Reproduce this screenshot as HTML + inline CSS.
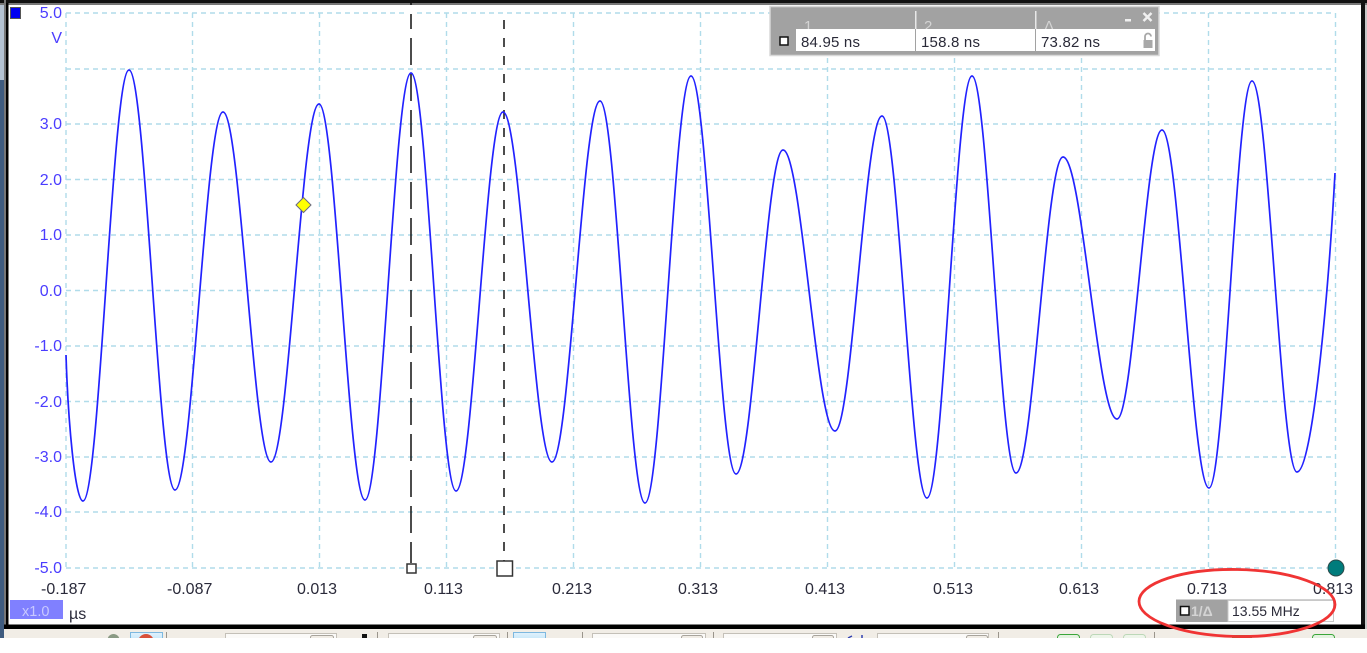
<!DOCTYPE html>
<html>
<head>
<meta charset="utf-8">
<style>
html,body{margin:0;padding:0;background:#fff}
body{width:1367px;height:653px;overflow:hidden;position:relative}
svg{display:block}
#root{position:absolute;left:0;top:0;filter:blur(.3px)}
text{font-family:"Liberation Sans",sans-serif}
</style>
</head>
<body>
<svg id="root" width="1367" height="653" viewBox="0 0 1367 653" xmlns="http://www.w3.org/2000/svg">
<defs>
<linearGradient id="lb" x1="0" y1="0" x2="0" y2="1"><stop offset="0" stop-color="#e2f2fc"/><stop offset="1" stop-color="#bfe3f8"/></linearGradient>
</defs>
<!-- outside frame -->
<rect x="0" y="0" width="1367" height="653" fill="#fff"/>
<rect x="0" y="0" width="4" height="80" fill="#b4c2d2"/>
<rect x="0" y="80" width="4" height="558" fill="#3f5c80"/>
<rect x="1365" y="0" width="2" height="638" fill="#c8c8c8"/>
<!-- toolbar -->
<rect x="4" y="629" width="1363" height="9" fill="#f1ede6"/>
<g fill="#fbfaf8" stroke="#c4c0b8">
<rect x="225.500" y="633.500" width="111" height="8"/>
<rect x="388.500" y="633.500" width="111" height="8"/>
<rect x="592.500" y="633.500" width="113" height="8"/>
<rect x="723.500" y="633.500" width="113" height="8"/>
<rect x="877.500" y="633.500" width="111" height="8"/>
</g>
<g fill="#f1ede6" stroke="#a8a49c">
<rect x="310.500" y="635.500" width="23" height="6" rx="2"/>
<rect x="473.500" y="635.500" width="23" height="6" rx="2"/>
<rect x="681.500" y="635.500" width="21" height="6" rx="2"/>
<rect x="812.500" y="635.500" width="21" height="6" rx="2"/>
<rect x="966.500" y="635.500" width="21" height="6" rx="2"/>
</g>
<g fill="#9a958c">
<rect x="166" y="632" width="1" height="6"/><rect x="377" y="632" width="1" height="6"/>
<rect x="507" y="632" width="1" height="6"/><rect x="582" y="632" width="1" height="6"/>
<rect x="713" y="632" width="1" height="6"/><rect x="998" y="632" width="1" height="6"/>
<rect x="1154" y="632" width="1" height="6"/>
</g>
<circle cx="113.500" cy="640" r="6" fill="#8a9a84"/>
<rect x="130.500" y="632.500" width="32" height="9" fill="url(#lb)" stroke="#7db8e0"/>
<circle cx="146" cy="642" r="8" fill="#d8503a"/>
<rect x="362" y="634" width="5" height="4" fill="#111"/>
<rect x="513.500" y="632.500" width="32" height="9" fill="url(#lb)" stroke="#7db8e0"/>
<path d="M848 638l4-2M862 638v-3" stroke="#3040b0" stroke-width="1.500" fill="none"/>
<g fill="#e4f2e0" stroke="#3aa63a">
<rect x="1057.500" y="634.500" width="22" height="7" rx="3"/>
<rect x="1312.500" y="634.500" width="22" height="7" rx="3"/>
</g>
<g fill="#eef5ea" stroke="#bcd8b8">
<rect x="1090.500" y="634.500" width="22" height="7" rx="3"/>
<rect x="1123.500" y="634.500" width="22" height="7" rx="3"/>
</g>
<rect x="1232" y="635" width="20" height="6" rx="2" fill="#4d9a3a"/>
<rect x="0" y="638" width="1367" height="15" fill="#fff"/>

<!-- frame -->
<rect x="6" y="3.500" width="1357" height="623" fill="#fff"/>
<rect x="0" y="0" width="1367" height="3" fill="#111"/>
<rect x="0" y="3" width="1367" height="2" fill="#777"/>
<rect x="4" y="0" width="2" height="629" fill="#777"/>
<rect x="6" y="3" width="2.500" height="626" fill="#000"/>
<rect x="1361" y="0" width="4" height="629" fill="#111"/>
<rect x="4" y="624.500" width="1361" height="4.500" fill="#000"/>

<!-- grid -->
<g stroke="#b0dcea" stroke-width="1.400" fill="none" stroke-dasharray="5 4">
<path d="M66 13H1335M66 69H1335M66 124H1335M66 179.500H1335M66 235H1335M66 290.500H1335M66 346H1335M66 401.500H1335M66 457H1335M66 512H1335M66 568H1335"/>
<path d="M66 13V568M192.500 13V568M319.500 13V568M446.500 13V568M573.500 13V568M700.500 13V568M827.500 13V568M954.500 13V568M1081.500 13V568M1208.500 13V568M1335.500 13V568"/>
</g>

<!-- cursors -->
<path d="M411 2V563" stroke="#111" stroke-width="1.500" stroke-dasharray="27 9" fill="none"/>
<path d="M504 20V562" stroke="#111" stroke-width="1.500" stroke-dasharray="9 9" fill="none"/>
<rect x="405" y="5" width="12" height="9" fill="#fff"/>
<rect x="407" y="564" width="9" height="9" fill="#fff" stroke="#333" stroke-width="1.500"/>
<rect x="497" y="561" width="15.500" height="15" fill="#fff" stroke="#333" stroke-width="1.500"/>

<!-- waveform -->
<path d="M66 355C68 420 75 501 83 501C99.600 501 112.400 70 129 70C145.600 70 158.400 490 175 490C192.300 490 205.700 112 223 112C240.300 112 253.700 462 271 462C288.300 462 301.700 104 319 104C335.600 104 348.400 500 365 500C381.600 500 394.400 73 411 73C427.200 73 439.800 491 456 491C472.900 491 486.100 112 503 112C520.600 112 534.400 462 552 462C569.300 462 582.700 101 600 101C616.200 101 628.800 503 645 503C661.600 503 674.400 76 691 76C707.200 76 719.800 474 736 474C752.900 474 766.100 150 783 150C801.700 150 816.300 431 835 431C851.900 431 865.100 116 882 116C898.200 116 910.800 498 927 498C943.200 498 955.800 76 972 76C987.800 76 1000.200 473 1016 473C1032.900 473 1046.100 157 1063 157C1082.400 157 1097.600 419 1117 419C1133.200 419 1145.800 130 1162 130C1178.900 130 1192.100 488 1209 488C1224.500 488 1236.500 81 1252 81C1268.200 81 1280.800 472 1297 472C1312 472 1328 300 1335 173" fill="none" stroke="#2222ff" stroke-width="1.700"/>

<!-- channel marker -->
<rect x="10.500" y="7.500" width="10" height="11" fill="#0000f0" stroke="#555" stroke-width="1"/>

<!-- y labels -->
<g font-size="16" fill="#4a3cff" text-anchor="end">
<text x="62" y="18">5.0</text>
<text x="62" y="43">V</text>
<text x="62" y="129">3.0</text>
<text x="62" y="185">2.0</text>
<text x="62" y="240">1.0</text>
<text x="62" y="296">0.0</text>
<text x="62" y="351">-1.0</text>
<text x="62" y="407">-2.0</text>
<text x="62" y="462">-3.0</text>
<text x="62" y="517">-4.0</text>
<text x="62" y="573">-5.0</text>
</g>
<!-- x labels -->
<g font-size="16" fill="#2a2a3a">
<text x="41" y="594">-0.187</text>
<text x="167" y="594">-0.087</text>
<text x="297" y="594">0.013</text>
<text x="424" y="594">0.113</text>
<text x="552" y="594">0.213</text>
<text x="678" y="594">0.313</text>
<text x="805" y="594">0.413</text>
<text x="933" y="594">0.513</text>
<text x="1059" y="594">0.613</text>
<text x="1187" y="594">0.713</text>
<text x="1313" y="594">0.813</text>
</g>

<!-- x1.0 -->
<rect x="10" y="600" width="53" height="19" fill="#8080ff"/>
<text x="22" y="616" font-size="14.500" fill="#c8c8ff">x1.0</text>
<text x="69" y="619" font-size="16" fill="#2a2a3a">µs</text>

<!-- markers -->
<path d="M303.500 197.500L311 205L303.500 212.500L296 205Z" fill="#ffff00" stroke="#6a6a80" stroke-width="1"/>
<circle cx="1336" cy="568" r="8" fill="#007c7c" stroke="#2a4a4a" stroke-width="1"/>

<!-- measurement panel -->
<rect x="770" y="6.500" width="389" height="49" fill="#a2a2a2" stroke="#d8d8d8" stroke-width="1.500"/>
<rect x="915" y="11" width="1.500" height="18" fill="#e8e8e8"/>
<rect x="1035" y="11" width="1.500" height="18" fill="#e8e8e8"/>
<g font-size="15" fill="#d4d4d4">
<text x="804" y="31">1</text>
<text x="924" y="31">2</text>
<text x="1044" y="31">Δ</text>
</g>
<rect x="796" y="29" width="119" height="22" fill="#fff"/>
<rect x="916" y="29" width="119" height="22" fill="#fff"/>
<rect x="1036" y="29" width="119" height="22" fill="#fff"/>
<rect x="1125" y="19" width="6" height="2.500" fill="#f0f0f0"/>
<path d="M1143.500 13L1151.500 21M1151.500 13L1143.500 21" stroke="#f0f0f0" stroke-width="2.500" fill="none"/>
<rect x="780" y="37" width="8" height="8" fill="#fff" stroke="#111" stroke-width="1.500"/>
<g font-size="15" fill="#2a2a38">
<text x="801" y="47" letter-spacing=".2">84.95 ns</text>
<text x="921" y="47" letter-spacing=".2">158.8 ns</text>
<text x="1041" y="47" letter-spacing=".2">73.82 ns</text>
</g>
<path d="M1145 40V36.500a3 3 0 0 1 6 0" fill="none" stroke="#a8a8a8" stroke-width="1.800"/>
<rect x="1143.500" y="40" width="9" height="8" fill="#a8a8a8"/>

<!-- frequency panel -->
<rect x="1176" y="599.500" width="158" height="22.500" fill="#a2a2a2"/>
<rect x="1228" y="600.500" width="105.500" height="21" fill="#fff" stroke="#c8c8c8"/>
<rect x="1180.500" y="606.500" width="8.500" height="8.500" fill="#fff" stroke="#111" stroke-width="1.500"/>
<text x="1191" y="616" font-size="14" font-weight="bold" fill="#d4d4d4">1/Δ</text>
<text x="1232" y="616" font-size="14" fill="#2a2a38">13.55 MHz</text>

<!-- red ellipse -->
<ellipse cx="1237" cy="603" rx="98" ry="33.500" transform="rotate(1 1237 603)" fill="none" stroke="#f03434" stroke-width="2.800"/>
</svg>
</body>
</html>
